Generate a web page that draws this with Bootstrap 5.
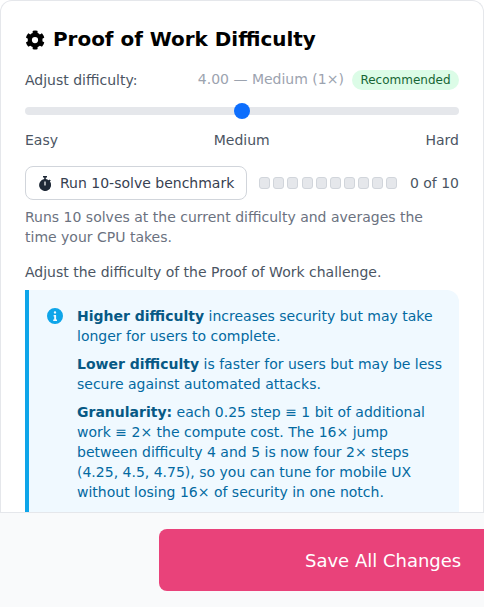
<!DOCTYPE html>
<html lang="en">
<head>
<meta charset="utf-8">
<title>Proof of Work Difficulty</title>
<link href="https://cdn.jsdelivr.net/npm/bootstrap@5.3.0/dist/css/bootstrap.min.css" rel="stylesheet">
<style>
html,body{height:100%;overflow:hidden}
body{font-family:"DejaVu Sans",sans-serif;background:#fff;font-size:14px;color:#4b5563}
.shell{height:607px}
.pane{flex:1 1 auto;min-height:0;overflow:hidden}
.panel{border:1px solid #e5e7eb;border-bottom:0;border-radius:12px 12px 0 0;padding:24px 24px 0;height:100%;overflow:hidden}
.ttl{font-size:19.95px;font-weight:700;color:#000;line-height:28px;margin:0 0 16px;gap:8px}
.ttl svg{width:20px;height:20px;flex:none;margin-top:1px}
.lbl{font-size:14px;color:#4b5563;line-height:22px}
.val{font-size:14px;color:#9ca3af;line-height:21px;margin:-1px 0 1px}
.rec{font-size:12px;line-height:20px;background:#dcfce7;color:#166534;border-radius:10px;padding:0 8.500px;margin-left:8px}
.track{height:8px;background:#e5e7eb;border-radius:4px;margin:16px 0 0}
.thumb{position:absolute;left:209px;top:-4px;width:16px;height:16px;border-radius:50%;background:#0d6efd}
.ticks{font-size:14px;color:#4b5563;line-height:21px;margin-top:15px}
.bench{height:34px;margin-top:15px;gap:12px}
.bbtn{font-size:14px;color:#374151;background:#fff;border:1px solid #d1d5db;border-radius:8px;padding:0 12px;height:34px;gap:8px;flex:none}
.bbtn svg{width:12px;height:15px;margin:0 1px}
.pips{gap:3.1px}
.pip{width:11px;height:12px;background:#e5e7eb;border:1px solid #d1d5db;border-radius:3px}
.cnt{font-size:14px;color:#4b5563;margin-left:auto;white-space:nowrap}
.note{font-size:14px;line-height:20px;color:#6b7280;margin:7px 0 0}
.intro{font-size:14px;line-height:21px;color:#4b5563;margin:15px 0 0}
.info{margin-top:7px;background:#f0f9ff;border-left:4px solid #0ea5e9;border-radius:0 12px 0 0;padding:16px 16px 16px 18px;color:#0369a1;font-size:14px;line-height:20px;gap:14px;min-height:240px}
.info strong{color:#075985}
.info svg{width:16px;height:16px;flex:none;margin-top:2px;color:#0ea5e9}
.info p{margin:0 0 8px}
.foot{flex:none;height:95px;background:#f9fafb;border-top:1px solid #e5e7eb;padding-top:16px;overflow:hidden}
.save{margin-left:159px;width:340px;height:62px;background:#e9427a;color:#fff;border:0;border-radius:8px;font-size:18px;text-align:left;padding:0 0 0 146px}
</style>
</head>
<body>
<div class="shell d-flex flex-column">
  <div class="pane">
    <div class="panel">
      <h2 class="ttl d-flex align-items-center">
        <svg viewBox="0 0 512 512" fill="currentColor"><path d="M487 315l-42-25a190 190 0 0 0 0-68l42-25c5-3 7-8 5-14-11-35-30-67-54-93-4-4-10-5-15-2l-42 24a188 188 0 0 0-59-34V30c0-5-4-10-9-11a221 221 0 0 0-108 0c-5 1-9 6-9 11v48a194 194 0 0 0-59 34L95 88c-5-3-11-2-15 2-24 26-43 58-54 93-2 6 0 11 5 14l42 25a190 190 0 0 0 0 68l-42 25c-5 3-7 8-5 14 11 35 30 67 54 93 4 4 10 5 15 2l42-24a188 188 0 0 0 59 34v48c0 5 4 10 9 11a221 221 0 0 0 108 0c5-1 9-6 9-11v-48a194 194 0 0 0 59-34l42 24c5 3 11 2 15-2 24-26 43-58 54-93 2-6 0-11-5-14zM256 336a80 80 0 1 1 0-160 80 80 0 0 1 0 160z"/></svg>
        <span>Proof of Work Difficulty</span>
      </h2>
      <div class="d-flex justify-content-between align-items-center">
        <span class="lbl">Adjust difficulty:</span>
        <span class="d-flex align-items-center"><span class="val">4.00 — Medium (1×)</span><span class="rec">Recommended</span></span>
      </div>
      <div class="track position-relative"><div class="thumb"></div></div>
      <div class="ticks d-flex justify-content-between"><span>Easy</span><span>Medium</span><span>Hard</span></div>
      <div class="bench d-flex align-items-center">
        <button type="button" class="bbtn d-flex align-items-center">
          <svg viewBox="2 0 12 15" fill="#1f2937"><path d="M6 0h4v1.600H8.800v1.500a6 6 0 0 1 3 1.200l.9-.9 1.100 1.100-.9.9A6 6 0 1 1 7.200 3.100V1.600H6z"/><path d="M7.400 5.500h1.200v4H7.400z" fill="#fff"/></svg>
          Run 10-solve benchmark
        </button>
        <div class="pips d-flex"><i class="pip"></i><i class="pip"></i><i class="pip"></i><i class="pip"></i><i class="pip"></i><i class="pip"></i><i class="pip"></i><i class="pip"></i><i class="pip"></i><i class="pip"></i></div>
        <span class="cnt">0 of 10</span>
      </div>
      <p class="note">Runs 10 solves at the current difficulty and averages the time your CPU takes.</p>
      <p class="intro">Adjust the difficulty of the Proof of Work challenge.</p>
      <div class="info d-flex">
        <svg viewBox="0 0 16 16" fill="currentColor"><path d="M8 0a8 8 0 1 0 0 16A8 8 0 0 0 8 0zm0 3.200a1.200 1.200 0 1 1 0 2.400 1.200 1.200 0 0 1 0-2.400zM6.600 7h2.500v4.600h.9V13H6.200v-1.400h1V8.400H6.600z"/></svg>
        <div>
          <p><strong>Higher difficulty</strong> increases security but may take longer for users to complete.</p>
          <p><strong>Lower difficulty</strong> is faster for users but may be less secure against automated attacks.</p>
          <p><strong>Granularity:</strong> each 0.25 step ≡ 1 bit of additional work ≡ 2× the compute cost. The 16× jump between difficulty 4 and 5 is now four 2× steps (4.25, 4.5, 4.75), so you can tune for mobile UX without losing 16× of security in one notch.</p>
        </div>
      </div>
    </div>
  </div>
  <div class="foot"><button type="button" class="save">Save All Changes</button></div>
</div>
<script src="https://cdn.jsdelivr.net/npm/bootstrap@5.3.0/dist/js/bootstrap.bundle.min.js"></script>
</body>
</html>
